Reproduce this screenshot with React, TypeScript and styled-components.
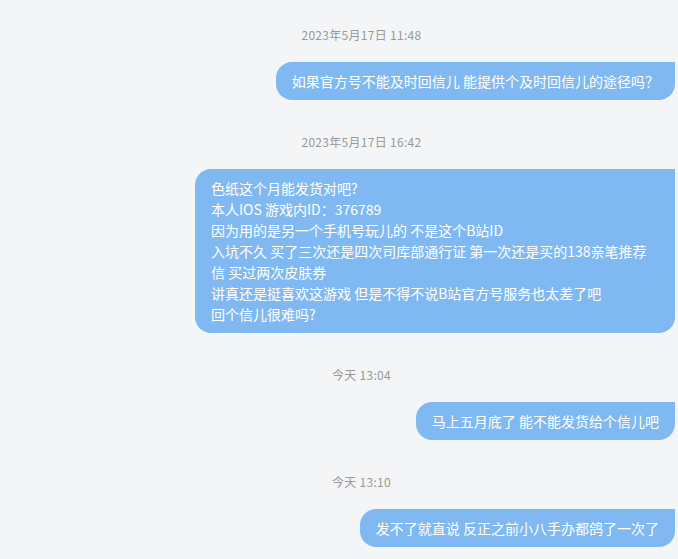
import React from 'react';
import styled, { createGlobalStyle } from 'styled-components';

const GlobalStyle = createGlobalStyle`
  html, body {
    margin: 0;
    padding: 0;
    background: #f4f5f7;
  }
  body {
    font-family: "Noto Sans CJK SC", "Liberation Sans", sans-serif;
  }
`;

const ChatList = styled.div`
  display: flex;
  flex-direction: column;
  padding: 26px 3px 0 48px;
  height: 559px;
  box-sizing: border-box;
  overflow: hidden;
`;

const Group = styled.div`
  display: flex;
  flex-direction: column;
  margin-bottom: 33px;
`;

const Time = styled.div`
  text-align: center;
  font-size: 12px;
  line-height: 18px;
  color: #999;
  margin-bottom: 18px;
  letter-spacing: 0.3px;
`;

const Row = styled.div`
  display: flex;
  justify-content: flex-end;
`;

const Bubble = styled.div`
  max-width: 480px;
  box-sizing: border-box;
  padding: 8.5px 16px;
  background: #80b9f2;
  color: #fff;
  font-size: 14px;
  line-height: 21px;
  border-radius: 16px 0 16px 16px;
  white-space: pre-wrap;
  word-break: break-all;
`;

type Message = { time: string; text: string };

const messages: Message[] = [
  { time: '2023年5月17日 11:48', text: '如果官方号不能及时回信儿 能提供个及时回信儿的途径吗？' },
  {
    time: '2023年5月17日 16:42',
    text:
      '色纸这个月能发货对吧?\n本人IOS 游戏内ID：376789\n因为用的是另一个手机号玩儿的 不是这个B站ID\n入坑不久 买了三次还是四次司库部通行证 第一次还是买的138亲笔推荐信 买过两次皮肤券\n讲真还是挺喜欢这游戏 但是不得不说B站官方号服务也太差了吧\n回个信儿很难吗?',
  },
  { time: '今天 13:04', text: '马上五月底了 能不能发货给个信儿吧' },
  { time: '今天 13:10', text: '发不了就直说 反正之前小八手办都鸽了一次了' },
];

const App: React.FC = () => (
  <>
    <GlobalStyle />
    <ChatList>
      {messages.map((m) => (
        <Group key={m.time}>
          <Time>{m.time}</Time>
          <Row>
            <Bubble>{m.text}</Bubble>
          </Row>
        </Group>
      ))}
    </ChatList>
  </>
);

export default App;
